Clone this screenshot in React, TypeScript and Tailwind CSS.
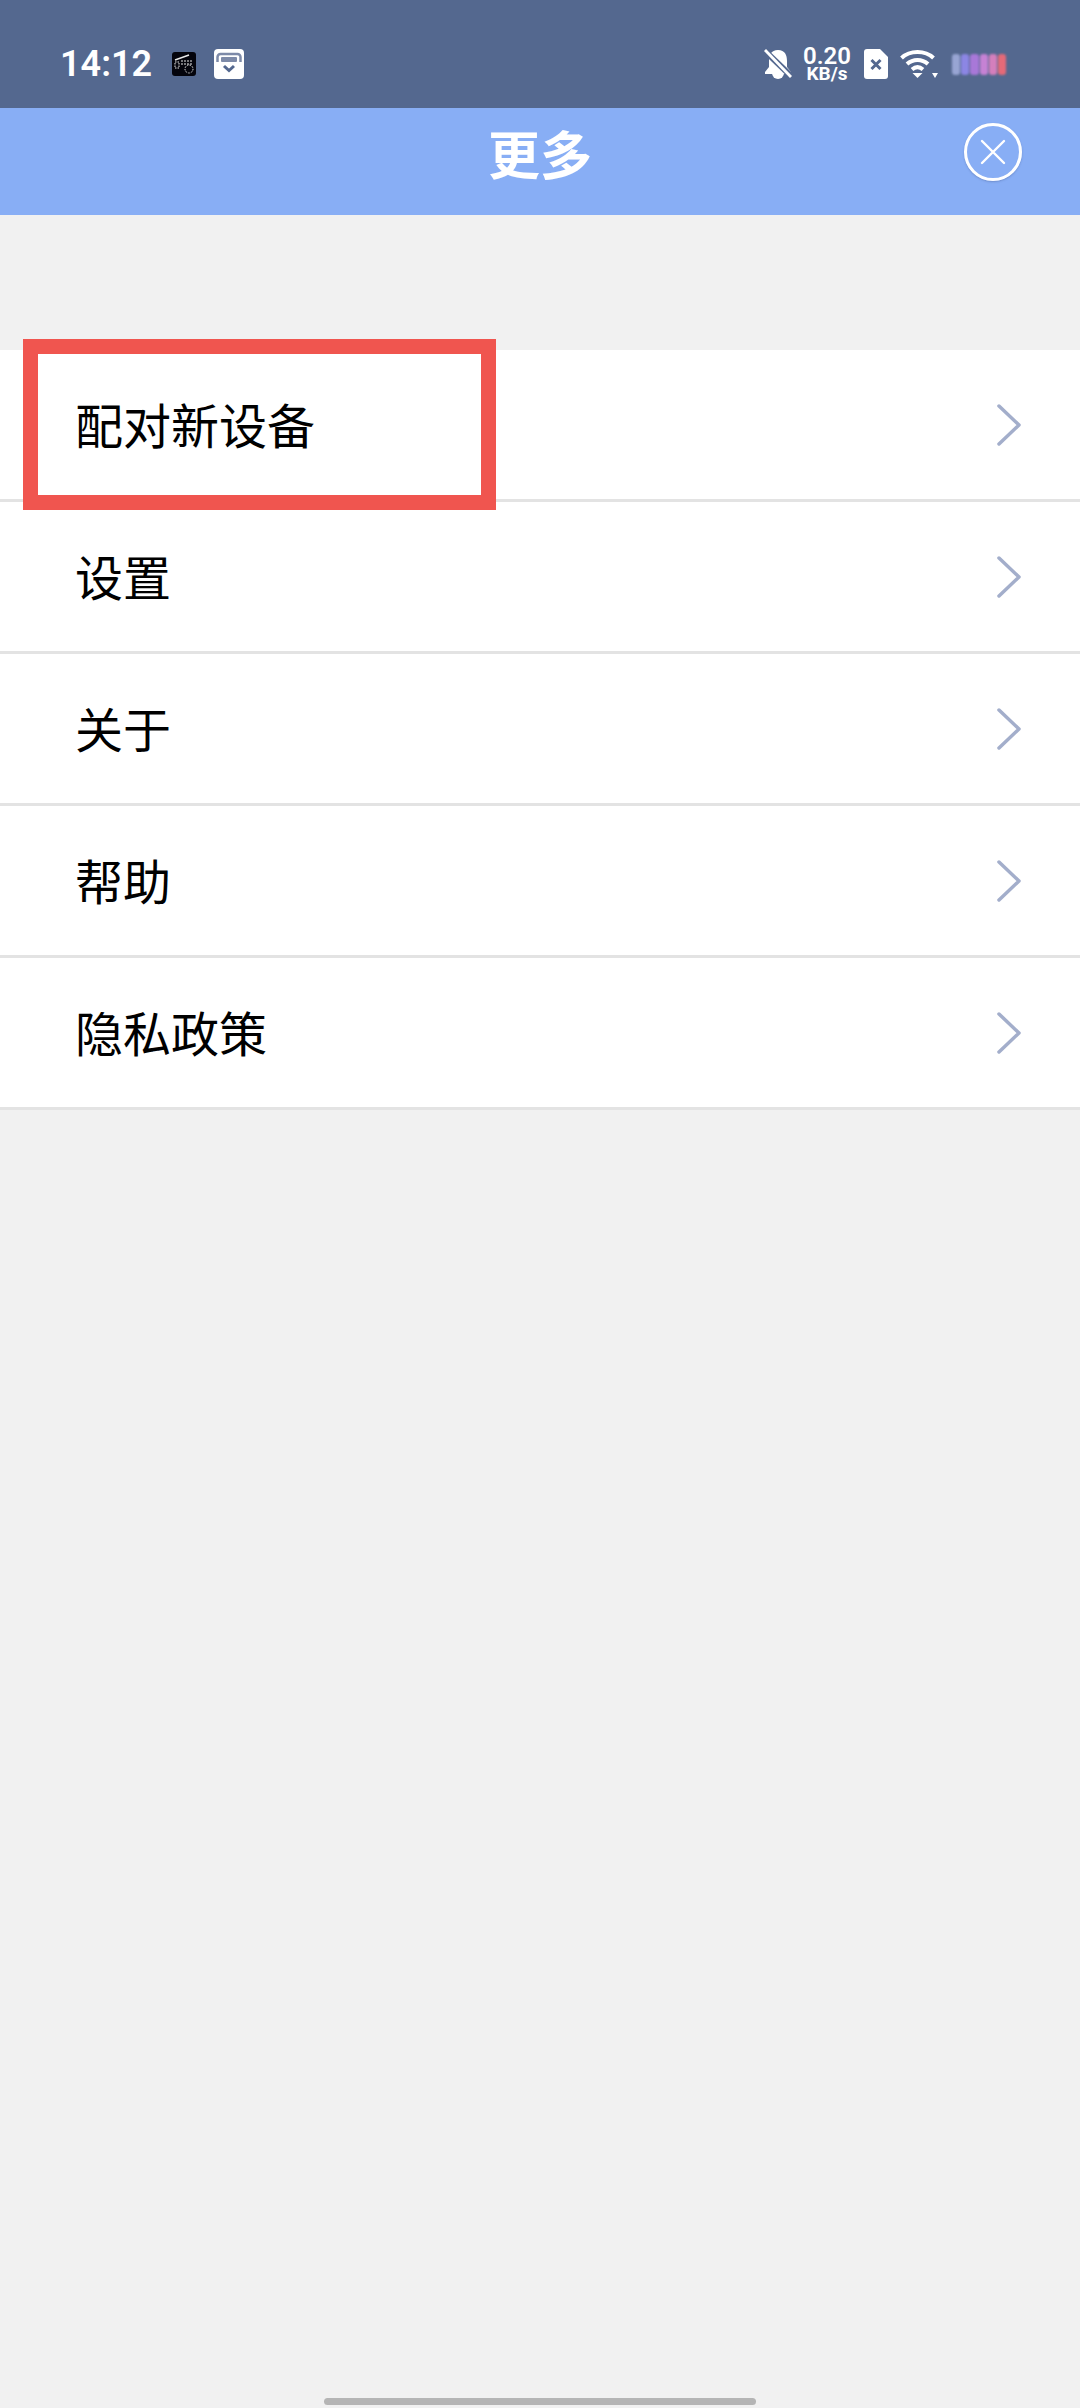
const MENU_ITEMS = ['配对新设备', '设置', '关于', '帮助', '隐私政策'];

const SIGNAL_BARS = ['#98a5d3', '#8c86e4', '#a878d8', '#c682d4', '#d47fbc', '#e56a78'];

function AppGlyph() {
  return (
    <svg width="24" height="24" viewBox="0 0 24 24" className="rounded-[3px]">
      <rect width="24" height="24" fill="#04040c" />
      <g stroke="#e8e8e8" fill="none" strokeWidth="1">
        <path d="M3 8 L17 3" strokeWidth="1.4" />
        <path d="M3 10h4v6H3z" strokeDasharray="1.5 1" />
        <path d="M9 9h12M9 12h12" strokeDasharray="2 1" />
        <circle cx="17" cy="17" r="4" strokeDasharray="1.5 1.2" />
      </g>
    </svg>
  );
}

function CalendarCheck() {
  return (
    <svg width="30" height="30" viewBox="0 0 30 30">
      <rect width="30" height="30" rx="4" fill="#ffffff" />
      <path d="M3.500 13V8a3 3 0 0 1 3-3h17a3 3 0 0 1 3 3v5" fill="none" stroke="#7d8aa8" strokeWidth="2.500" />
      <rect x="7" y="8" width="16" height="5" rx="1" fill="#7d8aa8" />
      <path d="M10 17l5 4.500 5-4.500" fill="none" stroke="#54688f" strokeWidth="3" />
    </svg>
  );
}

function BellOff() {
  return (
    <svg width="28" height="30" viewBox="0 0 28 30">
      <path d="M14 1C7 1 5 6 5 12v6l-4 5v2h26v-2l-4-5v-6C23 6 21 1 14 1z" fill="#ffffff" />
      <path d="M8 24a6 6 0 0 0 12 0z" fill="#ffffff" />
      <path d="M0 1l28 27" stroke="#54688f" strokeWidth="6" />
      <path d="M1 1l26 27" stroke="#ffffff" strokeWidth="2.800" />
    </svg>
  );
}

function SimOff() {
  return (
    <svg width="24" height="30" viewBox="0 0 24 30">
      <path d="M3 0h13l8 8v19a3 3 0 0 1-3 3H3a3 3 0 0 1-3-3V3a3 3 0 0 1 3-3z" fill="#ffffff" />
      <path d="M7.500 11l9 9M16.500 11l-9 9" stroke="#54688f" strokeWidth="3" />
    </svg>
  );
}

function Wifi() {
  return (
    <svg width="38" height="30" viewBox="0 0 38 30" fill="none" stroke="#ffffff" strokeWidth="4">
      <path d="M1.500 9C10 1 25 1 33.500 9" />
      <path d="M7 15c6-5.500 15-5.500 21 0" />
      <path d="M12 20.500c3.500-3 7.500-3 11 0" />
      <path d="M12.500 24h10l-5 5z" fill="#ffffff" stroke="none" />
      <path d="M32 24h6l-3 5z" fill="#ffffff" stroke="none" />
    </svg>
  );
}

function SignalStrip() {
  return (
    <div className="flex w-[54px] h-[21px] gap-[1px] blur-[0.8px]">
      {SIGNAL_BARS.map((color) => (
        <div key={color} className="flex-1 rounded-[3px]" style={{ backgroundColor: color }} />
      ))}
    </div>
  );
}

function StatusBar() {
  return (
    <div className="h-[108px] bg-[#54688f] flex items-center pl-[60px] pr-[74px] pt-[20px] text-white font-['Roboto',sans-serif]">
      <span className="text-[36px] leading-none font-semibold">14:12</span>
      <div className="ml-[20px]">
        <AppGlyph />
      </div>
      <div className="ml-[18px]">
        <CalendarCheck />
      </div>
      <div className="ml-auto flex items-center">
        <BellOff />
        <div className="ml-[10px] w-[50px] flex flex-col items-center font-semibold">
          <span className="text-[24px] leading-[20px]">0.20</span>
          <span className="text-[19px] leading-[16px] font-bold">KB/s</span>
        </div>
        <div className="ml-[12px]">
          <SimOff />
        </div>
        <div className="ml-[12px]">
          <Wifi />
        </div>
        <div className="ml-[14px]">
          <SignalStrip />
        </div>
      </div>
    </div>
  );
}

function Header() {
  return (
    <header className="relative h-[107px] bg-[#88aef5] flex items-center justify-center pb-[18px]">
      <h1 className="text-[52px] leading-none font-bold text-white">更多</h1>
      <button className="absolute right-[58px] top-[15px] w-[58px] h-[58px] rounded-full border-[3px] border-white flex items-center justify-center shadow-[0_1px_2px_rgba(60,80,130,0.35)]">
        <svg width="26" height="26" viewBox="0 0 26 26" stroke="#ffffff" strokeWidth="2.400" strokeLinecap="round">
          <path d="M2 2l22 22M24 2L2 24" />
        </svg>
      </button>
    </header>
  );
}

export default function App() {
  return (
    <div className="h-[2408px] flex flex-col bg-[#f1f1f1] font-['Noto_Sans_CJK_SC','Noto_Sans',sans-serif]">
      <StatusBar />
      <Header />

      {/* Menu list */}
      <div className="relative mt-[135px]">
        {MENU_ITEMS.map((label) => (
          <div
            key={label}
            className="h-[152px] bg-white border-b-[3px] border-[#e3e3e3] flex items-center justify-between pl-[75px] pr-[59px]"
          >
            <span className="text-[48px] leading-none text-black pb-[3px]">{label}</span>
            <svg width="24" height="42" viewBox="0 0 24 42" fill="none" stroke="#a3aecb" strokeWidth="3.500" strokeLinecap="round" strokeLinejoin="round">
              <path d="M2 2l20 19L2 40" />
            </svg>
          </div>
        ))}

        {/* Highlight around the first row */}
        <div className="absolute left-[23px] top-[-11px] w-[473px] h-[171px] border-[15px] border-[#f0554f] pointer-events-none" />
      </div>

      {/* Home indicator */}
      <div className="mt-auto mb-[3px] flex justify-center">
        <div className="w-[432px] h-[7px] rounded-full bg-[#b5b5b5]" />
      </div>
    </div>
  );
}
